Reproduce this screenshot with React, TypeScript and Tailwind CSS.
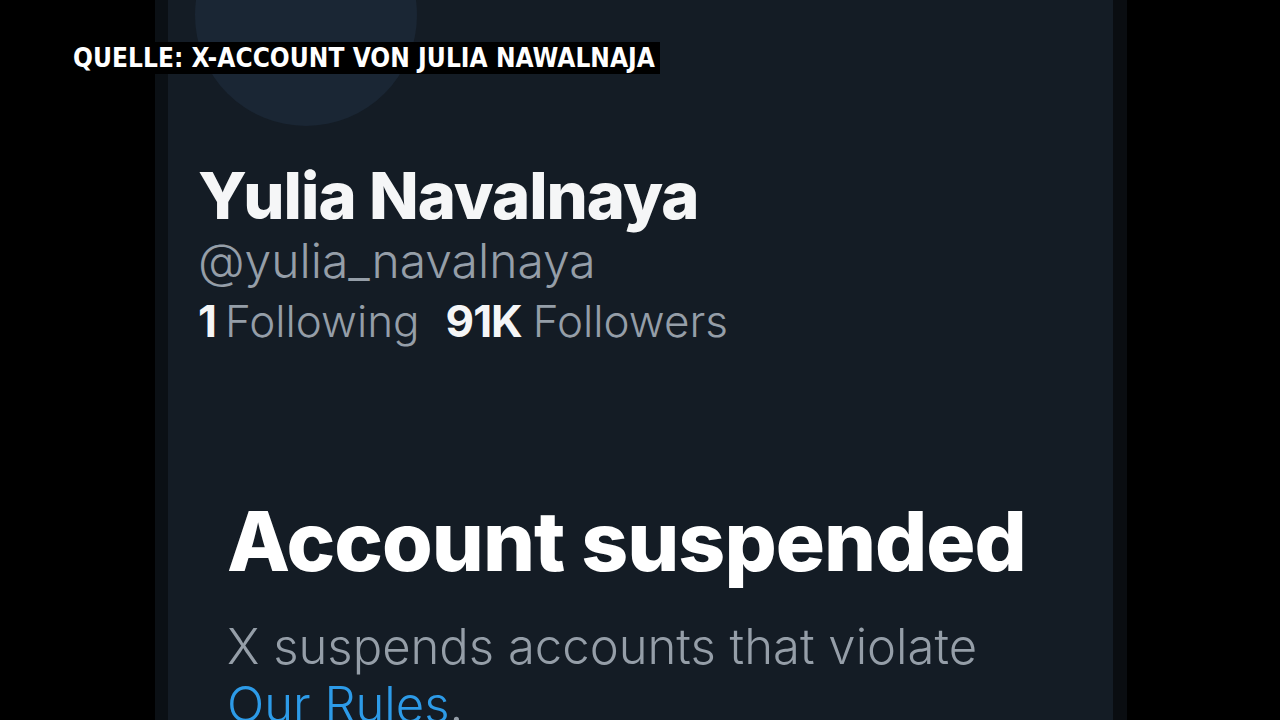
import React from 'react';

const App = () => {
  return (
    <div className="w-[1280px] h-[720px] bg-black overflow-hidden flex relative">
      {/* Phone screen */}
      <div className="ml-[155px] w-[972px] h-full bg-[#141c25] border-l-[13px] border-r-[14px] border-l-[#0b1015] border-r-[#0a0d11] flex flex-col overflow-hidden">
        {/* Avatar, mostly scrolled off */}
        <div className="ml-[27px] -mt-[96px] w-[222px] h-[222px] rounded-full bg-[#1a2634] shrink-0" />

        {/* Profile */}
        <div className="ml-[30px] mt-[30px] flex flex-col font-['Inter',sans-serif]">
          <h1 className="text-[65px] leading-[80px] font-extrabold text-[#f5f6f7] tracking-[-1px]">
            Yulia Navalnaya
          </h1>
          <p className="-mt-[3px] text-[48px] leading-[56px] text-[#959ea8] font-light">
            @yulia_navalnaya
          </p>
          <div className="mt-[3px] flex items-baseline text-[44px] leading-[58px]">
            <span className="font-bold text-[#f5f6f7]">1</span>
            <span className="ml-[8px] text-[#959ea8] font-light">Following</span>
            <span className="ml-[26px] font-bold text-[#f5f6f7] tracking-[-1px]">91K</span>
            <span className="ml-[11px] text-[#959ea8] font-light">Followers</span>
          </div>
        </div>

        {/* Suspension notice */}
        <div className="ml-[59px] mt-[142px] flex flex-col font-['Inter',sans-serif]">
          <h2 className="text-[82px] leading-[100px] font-extrabold text-white tracking-[-1px]">
            Account suspended
          </h2>
          <p className="mt-[26px] text-[49px] leading-[58px] text-[#959ea8] font-light">
            X suspends accounts that violate
            <br />
            <span className="text-[#2d9be8]">Our Rules</span>.
          </p>
        </div>
      </div>

      {/* Source caption */}
      <div className="absolute left-[68px] top-[42px] h-[32px] px-[5px] bg-black flex items-center">
        <span className="text-[26px] font-bold text-white font-['DejaVu_Sans_Condensed','Liberation_Sans_Narrow',sans-serif] tracking-[0.05px]">
          QUELLE: X-ACCOUNT VON JULIA NAWALNAJA
        </span>
      </div>
    </div>
  );
};

export default App;
